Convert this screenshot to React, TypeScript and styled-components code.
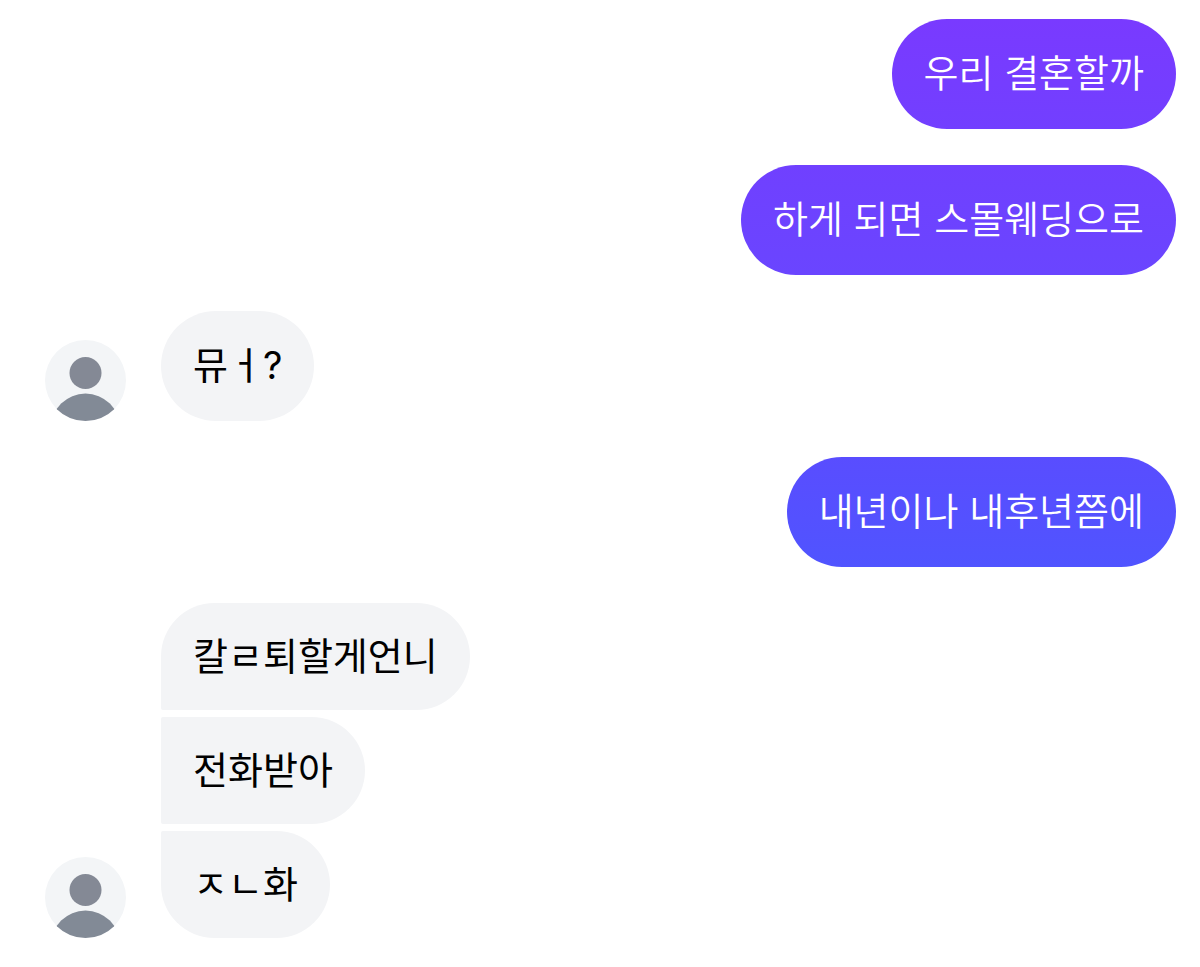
import React from "react";
import styled, { createGlobalStyle } from "styled-components";

const GlobalStyle = createGlobalStyle`
  * { box-sizing: border-box; }
  body {
    margin: 0;
    background: #ffffff;
    font-family: Inter, "Noto Sans CJK KR", sans-serif;
  }
`;

const Chat = styled.main`
  display: flex;
  flex-direction: column;
  gap: 36px;
  padding: 19px 24px 29px 45px;
`;

const Group = styled.section<{ $mine?: boolean }>`
  display: flex;
  align-items: flex-end;
  justify-content: ${(p) => (p.$mine ? "flex-end" : "flex-start")};
  gap: 35px;
`;

const Stack = styled.div`
  display: flex;
  flex-direction: column;
  align-items: flex-start;
  gap: 7px;
`;

type Place = "single" | "first" | "middle" | "last";

const corners: Record<Place, string> = {
  single: "55px",
  first: "54px 54px 54px 2px",
  middle: "2px 54px 54px 2px",
  last: "2px 54px 54px 54px",
};

const Bubble = styled.p<{ $place: Place; $fill?: string }>`
  margin: 0;
  padding: ${(p) => (p.$place === "single" ? "24px 32px 26px" : "23px 32px 24px")};
  border-radius: ${(p) => corners[p.$place]};
  background: ${(p) => p.$fill ?? "#f3f4f6"};
  color: ${(p) => (p.$fill ? "#ffffff" : "#000000")};
  font-size: 38px;
  font-weight: ${(p) => (p.$fill ? 350 : 400)};
  line-height: 60px;
  white-space: nowrap;
`;

const AvatarIcon = styled.svg`
  flex: none;
  width: 81px;
  height: 81px;
`;

function Avatar() {
  return (
    <AvatarIcon viewBox="0 0 81 81" role="img" aria-label="프로필">
      <clipPath id="avatar-circle">
        <circle cx="40.5" cy="40.5" r="40.5" />
      </clipPath>
      <g clipPath="url(#avatar-circle)">
        <rect width="81" height="81" fill="#f3f5f7" />
        <circle cx="40.5" cy="33" r="16" fill="#848995" />
        <circle cx="40.5" cy="88" r="34.5" fill="#828a96" />
      </g>
    </AvatarIcon>
  );
}

interface Message {
  text: string;
  fill?: string;
}

interface Turn {
  mine: boolean;
  messages: Message[];
}

const turns: Turn[] = [
  { mine: true, messages: [{ text: "우리 결혼할까", fill: "linear-gradient(#793aff, #723fff)" }] },
  { mine: true, messages: [{ text: "하게 되면 스몰웨딩으로", fill: "linear-gradient(#7040ff, #6a45ff)" }] },
  { mine: false, messages: [{ text: "뮤ㅓ?" }] },
  { mine: true, messages: [{ text: "내년이나 내후년쯤에", fill: "linear-gradient(#594dff, #5054ff)" }] },
  { mine: false, messages: [{ text: "칼ㄹ퇴할게언니" }, { text: "전화받아" }, { text: "ㅈㄴ화" }] },
];

function placeOf(index: number, count: number): Place {
  if (count === 1) return "single";
  if (index === 0) return "first";
  return index === count - 1 ? "last" : "middle";
}

export default function App() {
  return (
    <>
      <GlobalStyle />
      <Chat lang="ko">
        {turns.map((turn, t) => (
          <Group key={t} $mine={turn.mine}>
            {!turn.mine && <Avatar />}
            <Stack>
              {turn.messages.map((m, i) => (
                <Bubble key={i} $place={placeOf(i, turn.messages.length)} $fill={m.fill}>
                  {m.text}
                </Bubble>
              ))}
            </Stack>
          </Group>
        ))}
      </Chat>
    </>
  );
}
